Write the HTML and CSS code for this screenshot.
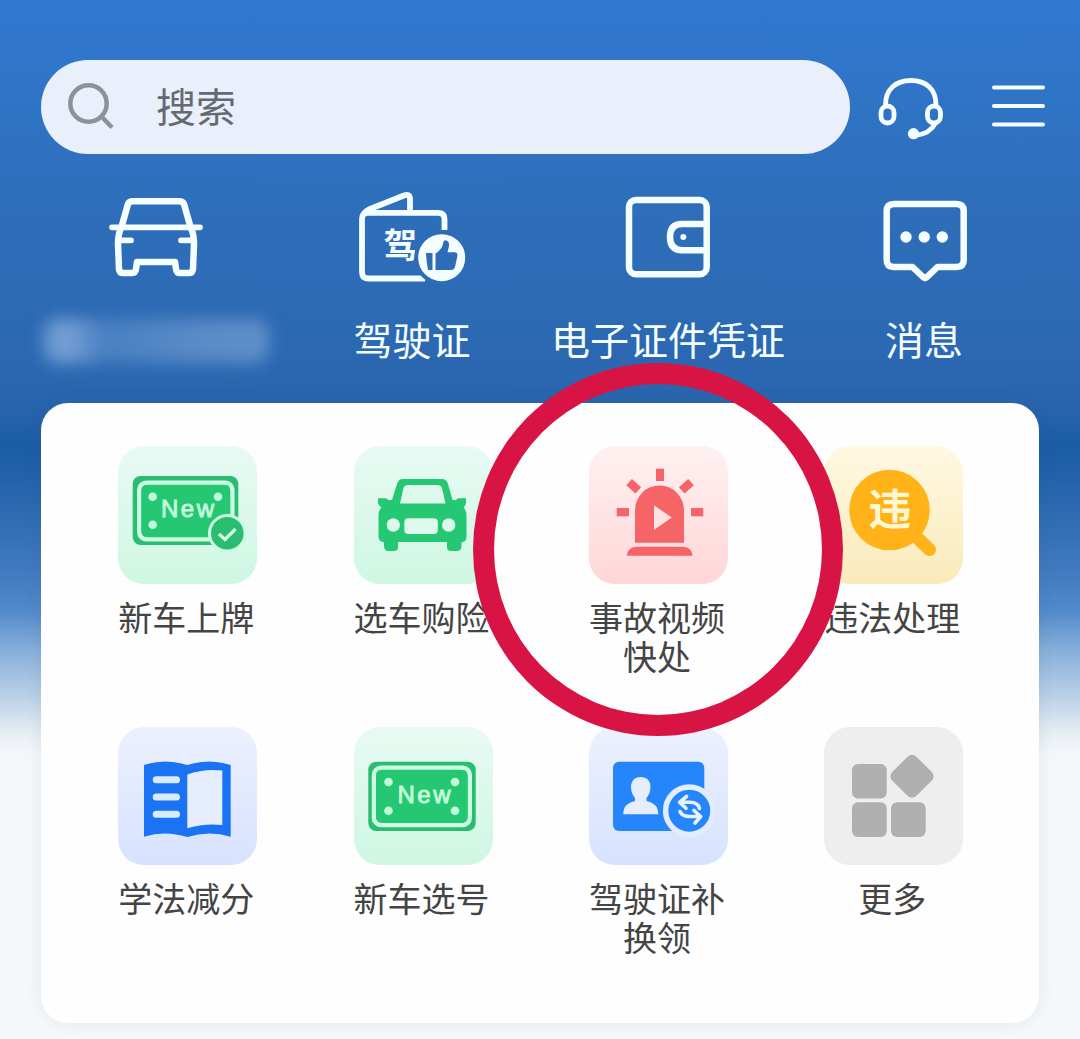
FILE: index.html
```html
<!DOCTYPE html>
<html lang="zh-CN">
<head>
<meta charset="utf-8">
<title>首页</title>
<link rel="stylesheet" href="styles.css">
</head>
<body>
<main class="screen">
  <header class="topbar">
    <div class="search">
      <svg class="search-icon" width="50" height="50" viewBox="0 0 50 50"><circle cx="23.500" cy="21.500" r="18.200"/><path d="M36.500 34.500 47 45.500"/></svg>
      <span>搜索</span>
    </div>
    <svg class="headset" width="80" height="80" viewBox="0 0 80 80">
      <path d="M15.500 35C15.500 19 26 10.500 41 10.500S66 19 66 35"/>
      <rect x="11" y="36" width="13" height="17" rx="6.500"/><rect x="57.500" y="36" width="13" height="17" rx="6.500"/>
      <path d="M65.500 53C62 60 55 64.500 45 65.500"/><circle class="solid" cx="43.500" cy="63.700" r="3.200"/>
    </svg>
    <svg class="menu" width="54" height="44" viewBox="0 0 54 44"><path d="M3 2.500H52M3 21H52M3 39.500H52"/></svg>
  </header>

  <nav class="quick">
    <a class="quick-item">
      <svg class="line" width="120" height="110" viewBox="0 0 120 110">
        <path d="M37 15.300H83Q87 15.300 88 18L94.500 41Q98 48 98 58L97 83Q96.500 87 93 87H84Q80.500 87 80 83L79 76H41L40 83Q39.500 87 36 87H27Q23.500 87 23 83L22 58Q22 48 25.500 41L32 18Q33 15.300 37 15.300Z"/>
        <path d="M16 41.300H104M24 54.300H35M96 54.300H85" class="thin"/>
      </svg>
      <span class="redacted"></span>
    </a>
    <a class="quick-item">
      <svg class="line" width="120" height="110" viewBox="0 0 120 110">
        <path class="fine" d="M92.500 44V33Q92.500 26.800 86 26.800H16Q10 26.800 10 33V86Q10 92.500 16 92.500H73"/>
        <path class="fine" d="M11.500 29Q12.500 25.500 18 23L52 9.500Q58 7.500 58 13V25"/>
        <text x="31.500" y="71.500" class="glyph">驾</text>
        <circle class="badge" cx="89.700" cy="71.700" r="25.500"/>
        <path class="thumb" d="M74 67H80.500V84H76Q74.300 75 74 67ZM83.500 84V67.500Q89.500 64 91 58Q91.300 54.300 93.500 54.300Q97.500 55 97 60L95.500 66.300H103Q105.800 66.500 105.500 69.500L103 81Q102.300 84 99 84Z"/>
      </svg>
      <span>驾驶证</span>
    </a>
    <a class="quick-item">
      <svg class="line" width="120" height="110" viewBox="0 0 120 110">
        <rect x="21" y="14" width="77.700" height="74.300" rx="7"/>
        <path d="M97 37.900H74Q62 37.900 62 51T74 64.300H97"/><circle class="solid" cx="75.300" cy="51" r="3"/>
      </svg>
      <span>电子证件凭证</span>
    </a>
    <a class="quick-item">
      <svg class="line" width="120" height="110" viewBox="0 0 120 110">
        <path d="M30 18H92.500Q99.700 18 99.700 25V74Q99.700 81 92.500 81H73.500L63 91Q61 93 59 91L48.500 81H30Q22.700 81 22.700 74V25Q22.700 18 30 18Z"/>
        <g class="solid"><circle cx="42" cy="51" r="5.700"/><circle cx="60.200" cy="51" r="5.700"/><circle cx="78.300" cy="51" r="5.700"/></g>
      </svg>
      <span>消息</span>
    </a>
  </nav>

  <section class="card">
    <a class="tile">
      <svg class="tile-icon green" width="139" height="138" viewBox="0 0 139 138">
        <rect class="g2" x="14.700" y="30" width="105.600" height="69" rx="8"/>
        <rect class="ringrect" x="21.300" y="36.700" width="93" height="56.500" rx="7"/>
        <rect class="g1" x="23.300" y="38.700" width="89" height="52.500" rx="6"/>
        <g class="pale"><circle cx="34.700" cy="50.700" r="4.300"/><circle cx="100" cy="50.700" r="4.300"/><circle cx="34.700" cy="78.700" r="4.300"/></g>
        <text class="new" x="43" y="71" textLength="53">New</text>
        <circle class="check" cx="109.300" cy="87.300" r="17.800"/>
        <path class="tick" d="M101 88 107 93.500 117.500 83"/>
      </svg>
      <span>新车上牌</span>
    </a>
    <a class="tile">
      <svg class="tile-icon green" width="139" height="138" viewBox="0 0 139 138">
        <path class="g1" d="M38 54 43 38Q44.500 33 49 33H88Q92.500 33 94 38L98.500 54 102 54 104 52.300H112V57.500Q110.500 61 109.500 61Q112.500 65 112.500 69V91Q112.500 95.500 107.500 96.500V100Q107.500 105 103 105H97Q93 105 93 101V96H44V101Q44 105 40 105H34.500Q30 105 30 100V96.500Q24.500 95 24.500 91V69Q24.500 65 27.500 61Q26 61 24 57.500V52.300H32L34.500 54Z"/>
        <g class="mint"><path d="M46 57.500 49.500 42Q50.500 39 53.500 39H83.500Q87 39 88 42L91.500 57.500Z"/><circle cx="39.300" cy="79" r="6.700"/><circle cx="94.700" cy="79" r="6.700"/><rect x="50.300" y="72.300" width="33.500" height="15.700" rx="4"/></g>
      </svg>
      <span>选车购险</span>
    </a>
    <a class="tile">
      <svg class="tile-icon red" width="139" height="138" viewBox="0 0 139 138">
        <path d="M46 96.700V64A24.500 24.500 0 0 1 95 64V96.700ZM37.700 109.700Q39 101 47 100.700H94.500Q102.500 101 103.700 109.700Z"/>
        <rect x="67" y="22.700" width="8" height="12.300"/><rect x="27.700" y="62" width="12.300" height="8.300"/><rect x="102" y="62" width="12.300" height="8.300"/>
        <rect x="40.500" y="34" width="8.400" height="12.400" transform="rotate(-48 44.700 40.200)"/><rect x="93.200" y="34" width="8.400" height="12.400" transform="rotate(48 97.400 40.200)"/>
        <path class="play" d="M65 59.300 82.700 71.500 65 84Z"/>
      </svg>
      <span>事故视频<br>快处</span>
    </a>
    <a class="tile">
      <svg class="tile-icon yellow" width="139" height="138" viewBox="0 0 139 138">
        <circle cx="65.500" cy="64" r="40.300"/><path class="handle" d="M90 89 105.500 103.500"/>
        <text x="44.500" y="78.500">违</text>
      </svg>
      <span>违法处理</span>
    </a>
    <a class="tile">
      <svg class="tile-icon blue" width="139" height="138" viewBox="0 0 139 138">
        <path class="b1" d="M26 38Q47 31 69.300 38Q91 31 112.700 38V109.700Q91 103 69.300 110Q47 103 26 109.700Z"/>
        <path class="page" d="M69.300 47.500Q86 41.500 104.300 43.500V98Q86 96 69.300 101.300Z"/>
        <path class="rules" d="M38.200 52.700H58.500M38.200 70H58.500M38.200 87.300H58.500"/>
      </svg>
      <span>学法减分</span>
    </a>
    <a class="tile">
      <svg class="tile-icon green" width="139" height="138" viewBox="0 0 139 138">
        <rect class="g2" x="14.300" y="34.700" width="107.400" height="69.300" rx="8"/>
        <rect class="ringrect" x="20" y="40.700" width="95.700" height="57.300" rx="7"/>
        <rect class="g1" x="22" y="42.700" width="91.700" height="53.300" rx="6"/>
        <g class="pale"><circle cx="34.500" cy="55" r="4.300"/><circle cx="101" cy="55" r="4.300"/><circle cx="34.500" cy="83.700" r="4.300"/><circle cx="101" cy="83.700" r="4.300"/></g>
        <text class="new" x="43.500" y="75.500" textLength="53">New</text>
      </svg>
      <span>新车选号</span>
    </a>
    <a class="tile">
      <svg class="tile-icon blue" width="139" height="138" viewBox="0 0 139 138">
        <rect class="b2" x="24" y="34.700" width="91.300" height="69.300" rx="6"/>
        <path class="page" d="M51.700 50C58 50 61.500 54 61.500 60C61.500 65 59.500 68.500 57.500 71V74C64 76 69.300 78 69.300 87.300H34.300C34.300 78 39.500 76 46 74V71C44 68.500 42 65 42 60C42 54 45.500 50 51.700 50Z"/>
        <circle class="swap" cx="100.300" cy="83.700" r="23.700"/>
        <path class="arrows" d="M97.500 69.500 90.500 75.300 97 81.300M91 75.300H100Q109 75 110.500 81.500M105 83.500 111.700 89.500 106 96M111 89.500H101Q93 89.500 91 84.500"/>
      </svg>
      <span>驾驶证补<br>换领</span>
    </a>
    <a class="tile">
      <svg class="tile-icon gray" width="139" height="138" viewBox="0 0 139 138">
        <rect x="28" y="37" width="34.700" height="34.500" rx="6"/><rect x="28" y="75.300" width="34.700" height="34.700" rx="6"/><rect x="67" y="75.300" width="34.700" height="34.700" rx="6"/>
        <rect x="71" y="32.300" width="34" height="34" rx="6" transform="rotate(45 88 49.300)"/>
      </svg>
      <span>更多</span>
    </a>
  </section>
  <div class="highlight"></div>
</main>
</body>
</html>
```

FILE: styles.css
```css
* { box-sizing: border-box; }
body {
  margin: 0;
  font-family: "Noto Sans CJK SC", sans-serif;
}
.screen {
  position: relative;
  height: 1039px;
  padding: 60px 0 0;
  overflow: hidden;
  background: linear-gradient(180deg, #3079d1 0, #2f73c4 110px, #2e6eb9 220px, #2b67b0 380px, #2663ab 415px, #1a5ca6 447px, #2c69b0 506px, #3f78be 565px, #5189cb 610px, #87aeda 650px, #b9cfe7 695px, #e8eff5 735px, #f5f8fa 756px);
}
.topbar {
  display: flex;
  align-items: center;
  height: 94px;
  padding: 0 35px 0 41px;
}
.search {
  display: flex;
  align-items: center;
  width: 809px;
  height: 94px;
  padding-left: 24px;
  border-radius: 47px;
  background: #e9f0fc;
  color: #666a70;
  font-size: 40px;
  line-height: 60px;
}
.search span { margin-left: 41px; padding-bottom: 4px; }
.search-icon { fill: none; stroke: #8d9299; stroke-width: 4.500; }
.headset {
  margin: 5px 0 0 20px;
  fill: none;
  stroke: #f4fdff;
  stroke-width: 4.800;
}
.headset .solid { fill: #f4fdff; }
.menu {
  margin-left: 41px;
  fill: none;
  stroke: #f4fdff;
  stroke-width: 4;
  stroke-linecap: round;
}
.quick {
  display: grid;
  grid-template-columns: repeat(4, 256px);
  height: 249px;
  padding: 32px 28px 0;
}
.quick-item {
  display: flex;
  flex-direction: column;
  align-items: center;
  color: #f4fdff;
  font-size: 39px;
  line-height: 56px;
  white-space: nowrap;
}
.quick-item span { margin-top: 14px; }
.line { fill: none; stroke: #f4fdff; stroke-width: 6.500; stroke-linecap: round; stroke-linejoin: round; flex: none; }
.line .thin { stroke-width: 5.800; }
.line .fine { stroke-width: 5.800; stroke-linecap: butt; }
.line .solid { fill: #f4fdff; stroke: none; }
.line .glyph { fill: #f4fdff; stroke: none; font-size: 34px; font-weight: 700; }
.line .badge { fill: #f4fdff; stroke: #2d6cb7; stroke-width: 4; }
.line .thumb { fill: #2d6cb7; stroke: none; }
.quick-item .redacted {
  width: 226px;
  height: 44px;
  margin-top: 23px;
  border-radius: 14px;
  background:
    repeating-linear-gradient(90deg, rgba(35, 90, 165, .18) 0 2px, transparent 2px 7px),
    linear-gradient(90deg, #6596d0 0, #7aa4d8 20px, #6f9bd2 34px, #4c82c4 60px, #5085c5 90px, #5c8dc9 150px, #6293cc 226px);
  filter: blur(8px);
}
.card {
  display: grid;
  grid-template-columns: repeat(4, 235.400px);
  grid-template-rows: 281px 281px;
  align-content: start;
  width: 998px;
  height: 620px;
  margin-left: 41px;
  padding: 43px 27px 0 29px;
  border-radius: 27px;
  background: #fefefe;
  box-shadow: 0 0 16px rgba(60, 90, 80, .1);
}
.tile {
  display: flex;
  flex-direction: column;
  align-items: center;
  gap: 13px;
  color: #444;
  font-size: 34px;
  line-height: 39px;
  text-align: center;
}
.tile span { padding-right: 3px; }
.tile-icon { flex: none; border-radius: 26px; }
.green { background: linear-gradient(180deg, #e8faf3, #cff7e3); }
.red { background: linear-gradient(180deg, #fff1f1, #ffd6d8); fill: #f56466; }
.yellow { background: linear-gradient(180deg, #fff9e3, #faeaba); fill: #ffb319; }
.blue { background: linear-gradient(180deg, #ecf1fe, #d7e2fe); }
.gray { background: #eee; fill: #b0b0b0; }
.g1 { fill: #25c772; }
.g2 { fill: #2abd70; }
.mint { fill: #dcf9ec; }
.ringrect { fill: none; stroke: #cdfbe2; stroke-width: 4.500; }
.pale, .new { fill: #c3fadb; }
.new { font: 24px "Liberation Sans", Arial, sans-serif; stroke: #c3fadb; stroke-width: .900; }
.check { fill: #2abd70; stroke: #cdfbe2; stroke-width: 3; }
.tick { fill: none; stroke: #d2fbe4; stroke-width: 3.400; }
.play { fill: #ffe3e2; }
.handle { stroke: #ffb319; stroke-width: 13; stroke-linecap: round; }
.yellow text { fill: #fff6d2; font-size: 43px; font-weight: 700; }
.b1 { fill: #1973f3; }
.b2 { fill: #2585fa; }
.page { fill: #e5edff; }
.rules { stroke: #d9ebff; stroke-width: 7; stroke-linecap: round; }
.swap { fill: #2585fa; stroke: #e2ebff; stroke-width: 5.500; }
.arrows { fill: none; stroke: #e5f2ff; stroke-width: 3.600; stroke-linecap: round; stroke-linejoin: round; }
.highlight {
  position: absolute;
  left: 473px;
  top: 363px;
  width: 370px;
  height: 373px;
  border: 21px solid #d81445;
  border-radius: 50%;
}
```
